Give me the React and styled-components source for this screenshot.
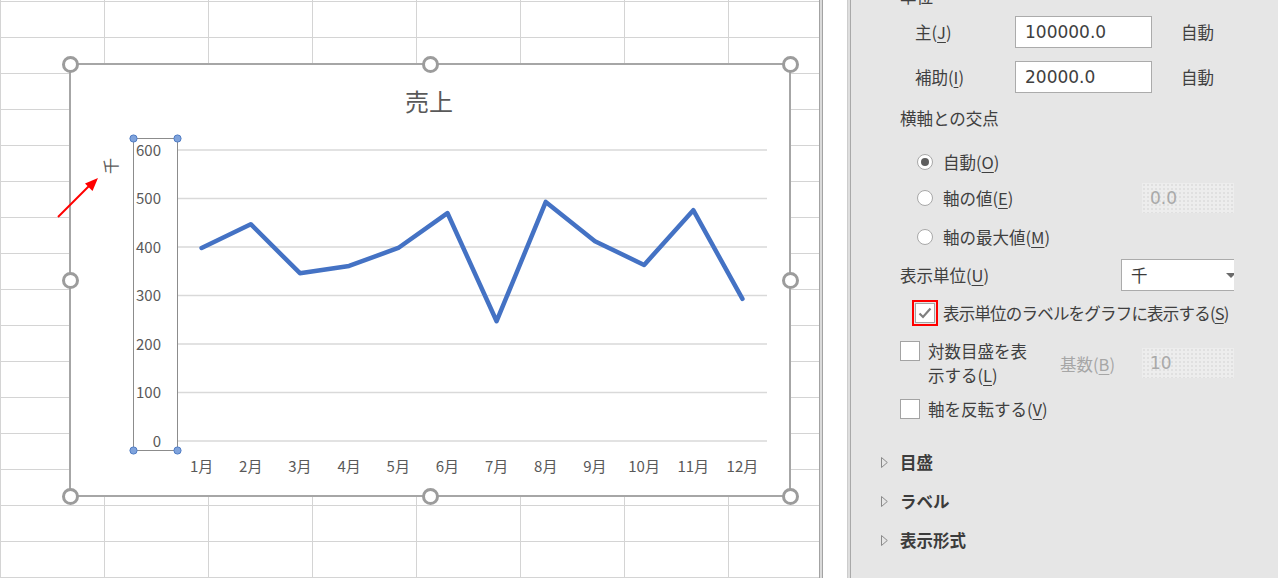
import React from 'react';
import styled, { createGlobalStyle } from 'styled-components';

const GlobalStyle = createGlobalStyle`
  html, body {
    margin: 0;
    padding: 0;
    background: #fff;
  }
  body {
    font-family: "Noto Sans CJK JP", "Noto Sans", sans-serif;
    overflow: hidden;
  }
`;

const sales = [398, 447, 346, 361, 398, 470, 247, 493, 412, 363, 476, 293];
const ticks = [600, 500, 400, 300, 200, 100, 0];
const yOf = v => 441 - (v * 291) / 600;
const xOf = i => 177 + 49.17 * (i + 0.5);

const frameHandles = [
    [70, 64], [430, 64], [790, 64],
    [70, 280], [790, 280],
    [70, 496], [430, 496], [790, 496],
];

const Screen = styled.div`
    display: flex;
    width: 1278px;
    height: 578px;
    overflow: hidden;
`;

const Sheet = styled.div`
    position: relative;
    flex: 0 0 819px;
    height: 100%;
    background-color: #fff;
    background-image:
        linear-gradient(to right, #d4d4d4 1px, transparent 1px),
        linear-gradient(to bottom, #d4d4d4 1px, transparent 1px);
    background-size: 104px 36px;
    background-position: 0 1px;
`;

const Divider = styled.div`
    flex: 0 0 2px;
    background: #dadada;
    border-left: 1px solid #a3a3a3;
    border-right: 1px solid #a3a3a3;
`;

const Gutter = styled.div`
    flex: 0 0 24px;
    background: #fff;
`;

const ChartFrame = styled.div`
    position: absolute;
    left: 69px;
    top: 63px;
    width: 722px;
    height: 434px;
    box-sizing: border-box;
    border: 2px solid #a6a6a6;
    background: #fff;
`;

const ChartSvg = styled.svg`
    display: block;
    font-family: "Noto Sans CJK JP", "Noto Sans", sans-serif;
`;

const Handle = styled.div`
    position: absolute;
    left: ${p => p.$x - 8.5}px;
    top: ${p => p.$y - 8.5}px;
    width: 17px;
    height: 17px;
    box-sizing: border-box;
    border: 3px solid #9c9c9c;
    border-radius: 50%;
    background: #fff;
`;

const ArrowLayer = styled.svg`
    position: absolute;
    left: 0;
    top: 0;
    pointer-events: none;
`;

const Panel = styled.div`
    flex: 1;
    display: flex;
    background: #e6e6e6;
    border-left: 1px solid #cdcdcd;
`;

const PanelEdge = styled.div`
    flex: 0 0 2px;
    background: #dedede;
    border-right: 1px solid #a9a9a9;
`;

const Content = styled.div`
    flex: 0 0 383px;
    display: flex;
    flex-direction: column;
    overflow: hidden;
    color: #404040;
    font-size: 16.5px;
`;

const Row = styled.div`
    display: flex;
    align-items: ${p => p.$align || 'center'};
    flex: 0 0 ${p => p.$h}px;
    margin-top: ${p => p.$mt}px;
    padding-left: ${p => p.$pl}px;
    white-space: nowrap;
`;

const Label = styled.span`
    flex: 0 0 ${p => (p.$w ? `${p.$w}px` : 'auto')};
    color: ${p => (p.$muted ? '#a6a6a6' : 'inherit')};
    margin-left: ${p => p.$ml || 0}px;
    line-height: ${p => p.$lh || 20}px;
    letter-spacing: ${p => p.$ls || 0}px;

    u {
        text-decoration-thickness: 1px;
        text-underline-offset: 3px;
    }
`;

const TextBox = styled.div`
    flex: 0 0 137px;
    height: 32px;
    box-sizing: border-box;
    display: flex;
    align-items: center;
    padding-left: 9px;
    background: #fff;
    border: 1px solid #ababab;
    font-family: "DejaVu Sans", sans-serif;
    font-size: 17px;
    color: #404040;
`;

const AutoText = styled.span`
    margin-left: 29px;
`;

const DisabledBox = styled.div`
    flex: 0 0 92px;
    height: 30px;
    margin-left: auto;
    margin-top: ${p => p.$mt || 0}px;
    box-sizing: border-box;
    display: flex;
    align-items: center;
    padding-left: 8px;
    background-color: #ededed;
    background-image: radial-gradient(#e0e0e0 0.7px, transparent 0.9px);
    background-size: 4px 4px;
    font-family: "DejaVu Sans", sans-serif;
    font-size: 17px;
    color: #a9a9a9;
`;

const Select = styled.div`
    flex: 0 0 113px;
    height: 32px;
    box-sizing: border-box;
    display: flex;
    align-items: center;
    justify-content: space-between;
    padding: 0 0 0 9px;
    background: #fff;
    border: 1px solid #ababab;
    border-right: none;
    color: #3a3a3a;
`;

const Caret = styled.span`
    width: 0;
    height: 0;
    margin-right: -2px;
    border-left: 5px solid transparent;
    border-right: 5px solid transparent;
    border-top: 5px solid #6a6a6a;
`;

const Radio = styled.span`
    flex: 0 0 16px;
    height: 16px;
    box-sizing: border-box;
    margin-right: 10px;
    border: 1px solid #a8a8a8;
    border-radius: 50%;
    background: #fff;
    display: flex;
    align-items: center;
    justify-content: center;

    &::after {
        content: '';
        width: 8px;
        height: 8px;
        border-radius: 50%;
        background: ${p => (p.$checked ? '#5e5e5e' : 'transparent')};
    }
`;

const Check = styled.span`
    flex: 0 0 20px;
    height: 20px;
    box-sizing: border-box;
    margin-right: 8px;
    margin-top: ${p => p.$mt || 0}px;
    border: 1px solid #a3a3a3;
    background: #fff;
    display: flex;
    align-items: center;
    justify-content: center;
`;

const RedFrame = styled.span`
    flex: 0 0 26px;
    height: 26px;
    box-sizing: border-box;
    margin-right: 5px;
    border: 2px solid #ff0000;
    padding: 1px;
    display: flex;

    ${Check} {
        margin: 0;
        flex-basis: 20px;
    }
`;

const SectionTitle = styled.span`
    font-weight: 700;
    margin-left: 12px;
    color: #3c3c3c;
`;

const Mark = ({ children }) => <u>{children}</u>;

const Chart = () => {
    const line = sales.map((v, i) => `${xOf(i)},${yOf(v)}`).join(' ');

    return (
        <ChartFrame>
            <ChartSvg width="718" height="430" viewBox="71 65 718 430">
                <text x="429" y="111" textAnchor="middle" fontSize="24" fill="#595959">売上</text>

                {ticks.map(t => (
                    <g key={t}>
                        <line x1="177" x2="767" y1={yOf(t)} y2={yOf(t)} stroke="#d9d9d9" strokeWidth="1.6" />
                        <text x="161" y={yOf(t) + 5.5} textAnchor="end" fontSize="15" fill="#595959">{t}</text>
                    </g>
                ))}

                {sales.map((_, i) => (
                    <text key={i} x={xOf(i)} y="472" textAnchor="middle" fontSize="15" fill="#595959">{i + 1}月</text>
                ))}

                <polyline points={line} fill="none" stroke="#4472c4" strokeWidth="4.5" strokeLinejoin="round" strokeLinecap="round" />

                {/* selected value axis */}
                <rect x="133.5" y="138.5" width="44" height="312" fill="none" stroke="#8c8c8c" strokeWidth="1" />
                {[[133.5, 138.5], [177.5, 138.5], [133.5, 450.5], [177.5, 450.5]].map(([cx, cy]) => (
                    <circle key={`${cx}-${cy}`} cx={cx} cy={cy} r="3.6" fill="#7fa3dc" stroke="#4f7cc4" strokeWidth="1" />
                ))}

                <text transform="translate(110 166) rotate(-90)" textAnchor="middle" dominantBaseline="central" fontSize="16" fill="#595959">千</text>
            </ChartSvg>
        </ChartFrame>
    );
};

const App = () => {
    return (
        <>
            <GlobalStyle />
            <Screen>
                <Sheet>
                    <Chart />
                    {frameHandles.map(([x, y]) => (
                        <Handle key={`${x}-${y}`} $x={x} $y={y} />
                    ))}
                    <ArrowLayer width="120" height="240">
                        <line x1="58" y1="217" x2="90" y2="185" stroke="#ff0000" strokeWidth="2" />
                        <polygon points="98,178 92.5,191 85,183.5" fill="#ff0000" />
                    </ArrowLayer>
                </Sheet>
                <Divider />
                <Gutter />
                <Panel>
                    <PanelEdge />
                    <Content>
                        <Row $h={20} $mt={-14} $pl={49}><Label>単位</Label></Row>

                        <Row $h={32} $mt={10} $pl={64}>
                            <Label $w={100}>主(<Mark>J</Mark>)</Label>
                            <TextBox>100000.0</TextBox>
                            <AutoText>自動</AutoText>
                        </Row>
                        <Row $h={32} $mt={13} $pl={64}>
                            <Label $w={100}>補助(<Mark>I</Mark>)</Label>
                            <TextBox>20000.0</TextBox>
                            <AutoText>自動</AutoText>
                        </Row>

                        <Row $h={30} $mt={10} $pl={49}><Label>横軸との交点</Label></Row>

                        <Row $h={30} $mt={14} $pl={66}>
                            <Radio $checked />
                            <Label>自動(<Mark>O</Mark>)</Label>
                        </Row>
                        <Row $h={30} $mt={6} $pl={66}>
                            <Radio />
                            <Label>軸の値(<Mark>E</Mark>)</Label>
                            <DisabledBox>0.0</DisabledBox>
                        </Row>
                        <Row $h={30} $mt={9} $pl={66}>
                            <Radio />
                            <Label>軸の最大値(<Mark>M</Mark>)</Label>
                        </Row>

                        <Row $h={32} $mt={7} $pl={49}>
                            <Label $w={221}>表示単位(<Mark>U</Mark>)</Label>
                            <Select>千<Caret /></Select>
                        </Row>

                        <Row $h={26} $mt={9} $pl={61}>
                            <RedFrame>
                                <Check>
                                    <svg width="14" height="12" viewBox="0 0 14 12">
                                        <polyline points="1.5,6.5 5,10 12.5,1.5" fill="none" stroke="#7f7f7f" strokeWidth="2.2" />
                                    </svg>
                                </Check>
                            </RedFrame>
                            <Label $ls={-0.8}>表示単位のラベルをグラフに表示する(<Mark>S</Mark>)</Label>
                        </Row>

                        <Row $h={50} $mt={13} $pl={49} $align="flex-start">
                            <Check $mt={2} />
                            <Label $lh={24}>対数目盛を表<br />示する(<Mark>L</Mark>)</Label>
                            <Label $muted $ml={33} $lh={50}>基数(<Mark>B</Mark>)</Label>
                            <DisabledBox $mt={9}>10</DisabledBox>
                        </Row>

                        <Row $h={30} $mt={5} $pl={49}>
                            <Check />
                            <Label>軸を反転する(<Mark>V</Mark>)</Label>
                        </Row>

                        {['目盛', 'ラベル', '表示形式'].map((title, i) => (
                            <Row key={title} $h={30} $mt={i === 0 ? 23 : 9} $pl={30}>
                                <svg width="7" height="11" viewBox="0 0 7 11">
                                    <polygon points="0.5,0.5 6.3,5.5 0.5,10.5" fill="none" stroke="#8a8a8a" strokeWidth="1" />
                                </svg>
                                <SectionTitle>{title}</SectionTitle>
                            </Row>
                        ))}
                    </Content>
                </Panel>
            </Screen>
        </>
    );
};

export default App;
